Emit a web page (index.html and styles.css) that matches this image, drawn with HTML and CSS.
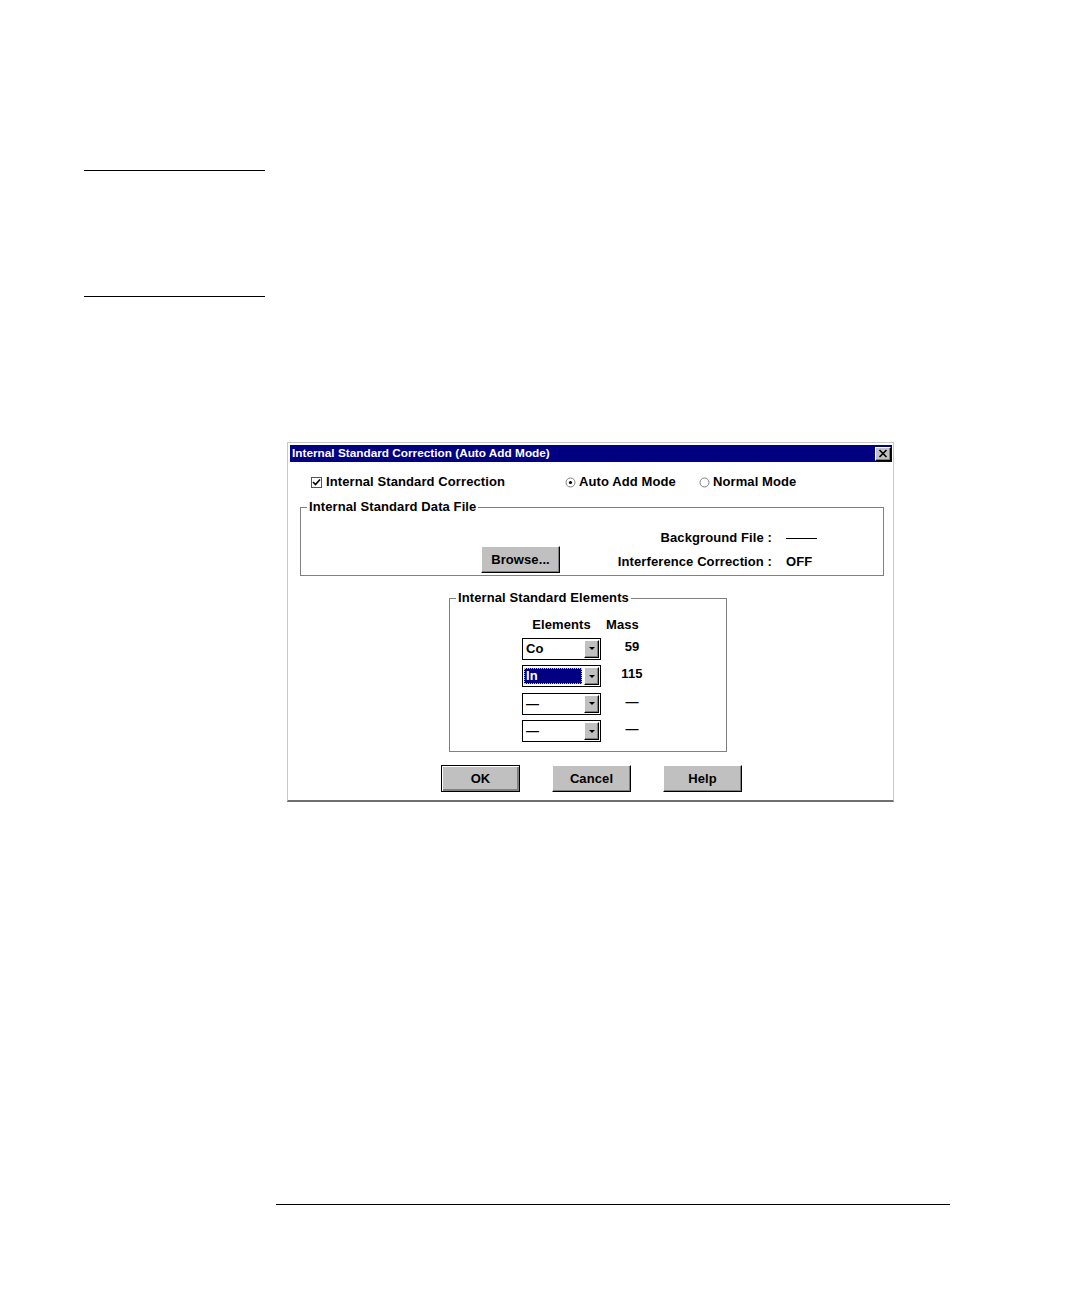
FILE: index.html
```html
<!DOCTYPE html>
<html>
<head>
<meta charset="utf-8">
<link rel="stylesheet" href="styles.css">
</head>
<body>
<div class="page">
  <div class="rule-short"></div>
  <div class="rule-short r2"></div>

  <div class="dialog">
    <div class="titlebar">
      <span class="title">Internal Standard Correction (Auto Add Mode)</span>
      <span class="close"><svg width="10" height="9" viewBox="0 0 10 9"><path d="M1.5 1 L8.5 8 M8.5 1 L1.5 8" stroke="#000" stroke-width="1.6" fill="none"/></svg></span>
    </div>

    <div class="opts">
      <div class="opt opt1">
        <span class="check"><svg width="9" height="9" viewBox="0 0 9 9"><path d="M1 4 L3.5 6.5 L8 1.5" stroke="#000" stroke-width="1.6" fill="none"/></svg></span>
        <span>Internal Standard Correction</span>
      </div>
      <div class="opt opt2">
        <svg class="radio" width="11" height="11" viewBox="0 0 11 11"><circle cx="5.5" cy="5.5" r="4.5" fill="#fff" stroke="#808080" stroke-width="1"/><circle cx="5.5" cy="5.5" r="1.6" fill="#000"/></svg>
        <span>Auto Add Mode</span>
      </div>
      <div class="opt">
        <svg class="radio" width="11" height="11" viewBox="0 0 11 11"><circle cx="5.5" cy="5.5" r="4.5" fill="#fff" stroke="#808080" stroke-width="1"/></svg>
        <span>Normal Mode</span>
      </div>
    </div>

    <fieldset class="group group-file">
      <legend>Internal Standard Data File</legend>
      <div class="df-body">
        <div class="btn browse">Browse...</div>
        <div class="info">
          <span class="lbl">Background File :</span><span class="val"><span class="dash-line"></span></span>
          <span class="lbl">Interference Correction :</span><span class="val">OFF</span>
        </div>
      </div>
    </fieldset>

    <fieldset class="group group-el">
      <legend>Internal Standard Elements</legend>
      <div class="el-grid">
        <div class="hdr hdr-el">Elements</div>
        <div class="hdr hdr-mass">Mass</div>

        <div class="combo"><span class="ctext">Co</span><span class="cbtn"><span class="arrow"></span></span></div>
        <div class="mass">59</div>

        <div class="combo"><span class="ctext sel">In</span><span class="cbtn"><span class="arrow"></span></span></div>
        <div class="mass">115</div>

        <div class="combo"><span class="ctext">—</span><span class="cbtn"><span class="arrow"></span></span></div>
        <div class="mass">—</div>

        <div class="combo"><span class="ctext">—</span><span class="cbtn"><span class="arrow"></span></span></div>
        <div class="mass">—</div>
      </div>
    </fieldset>

    <div class="buttons">
      <div class="btn default">OK</div>
      <div class="btn">Cancel</div>
      <div class="btn">Help</div>
    </div>
  </div>

  <div class="rule-bottom"></div>
</div>
</body>
</html>
```
FILE: styles.css
```css
html, body {
  margin: 0;
  padding: 0;
  background: #fff;
}

.page {
  width: 1080px;
  height: 1298px;
  padding-top: 170px;
  box-sizing: border-box;
  font-family: "Liberation Sans", Arial, sans-serif;
  font-weight: bold;
  font-size: 13px;
  letter-spacing: 0.1px;
  color: #000;
}

.rule-short {
  margin-left: 84px;
  width: 181px;
  border-top: 1px solid #000;
}

.r2 {
  margin-top: 125px;
}

.dialog {
  margin-top: 145px;
  margin-left: 287px;
  width: 607px;
  box-sizing: border-box;
  border: 1px solid #c8c8c8;
  border-bottom: 2px solid #707070;
  padding: 2px 1px 8px 2px;
  background: #fff;
}

.titlebar {
  height: 17px;
  background: #000080;
  color: #fff;
  display: flex;
  align-items: center;
  justify-content: space-between;
  padding: 0 1px 0 2px;
}

.title {
  font-size: 11.8px;
  letter-spacing: 0;
  line-height: 17px;
}

.close {
  width: 16px;
  height: 14px;
  box-sizing: border-box;
  background: #c0c0c0;
  border: 1px solid;
  border-color: #fff #000 #000 #fff;
  box-shadow: inset -1px -1px #808080;
  display: flex;
  align-items: center;
  justify-content: center;
}

.opts {
  display: flex;
  margin-top: 13px;
  padding-left: 21px;
  line-height: 14px;
}

.opt {
  display: flex;
  align-items: center;
}

.opt1 { width: 254px; }
.opt2 { width: 134px; }

.check {
  width: 11px;
  height: 11px;
  box-sizing: border-box;
  border: 1px solid #555;
  background: #fff;
  display: flex;
  align-items: center;
  justify-content: center;
  margin-right: 4px;
}

.radio {
  margin-right: 3px;
}

.group {
  margin: 11px 0 0 10px;
  padding: 0;
  border: 1px solid #808080;
  min-width: 0;
  box-sizing: border-box;
}

.group legend {
  margin-left: 6px;
  padding: 0 2px;
  line-height: 14px;
}

.group-file {
  width: 584px;
}

.df-body {
  display: flex;
  align-items: flex-start;
  padding-left: 180px;
  padding-bottom: 2px;
}

.btn {
  width: 79px;
  height: 27px;
  box-sizing: border-box;
  background: #c0c0c0;
  border: 1px solid;
  border-color: #fff #000 #000 #fff;
  box-shadow: inset -1px -1px #808080;
  display: flex;
  align-items: center;
  justify-content: center;
  line-height: 14px;
}

.browse {
  margin-top: 32px;
}

.btn.default {
  border: 1px solid #000;
  box-shadow: inset 1px 1px #fff, inset -2px -2px #808080;
}

.info {
  display: grid;
  grid-template-columns: 212px auto;
  column-gap: 14px;
  row-gap: 10px;
  margin-top: 17px;
  line-height: 14px;
}

.lbl {
  text-align: right;
}

.val {
  display: flex;
  align-items: center;
}

.dash-line {
  width: 31px;
  border-top: 1px solid #000;
}

.group-el {
  width: 278px;
  margin: 15px 0 0 159px;
}

.el-grid {
  display: grid;
  grid-template-columns: 79px 62px;
  row-gap: 5.5px;
  padding-left: 72px;
  margin-top: 13px;
  padding-bottom: 9px;
  line-height: 14px;
}

.hdr-el {
  text-align: center;
}

.hdr-mass {
  padding-left: 5px;
}

.combo {
  height: 22px;
  box-sizing: border-box;
  border: 1px solid #000;
  background: #fff;
  display: flex;
  align-items: stretch;
}

.ctext {
  flex: 1;
  padding-left: 3px;
  display: flex;
  align-items: center;
}

.ctext.sel {
  margin: 2px 1px 2px 1px;
  padding-left: 1px;
  background: #000080;
  color: #fff;
  border: 1px dotted #d8c860;
}

.cbtn {
  width: 15px;
  margin: 1px;
  box-sizing: border-box;
  background: #c0c0c0;
  border: 1px solid;
  border-color: #fff #000 #000 #fff;
  box-shadow: inset -1px -1px #808080;
  display: flex;
  align-items: center;
  justify-content: center;
}

.arrow {
  width: 0;
  height: 0;
  border-left: 3px solid transparent;
  border-right: 3px solid transparent;
  border-top: 3px solid #000;
}

.mass {
  text-align: center;
  align-self: center;
  padding-bottom: 4px;
}

.buttons {
  display: flex;
  gap: 32px;
  padding-left: 151px;
  margin-top: 13px;
}

.rule-bottom {
  margin-top: 402px;
  margin-left: 276px;
  width: 674px;
  border-top: 1px solid #000;
}
```
